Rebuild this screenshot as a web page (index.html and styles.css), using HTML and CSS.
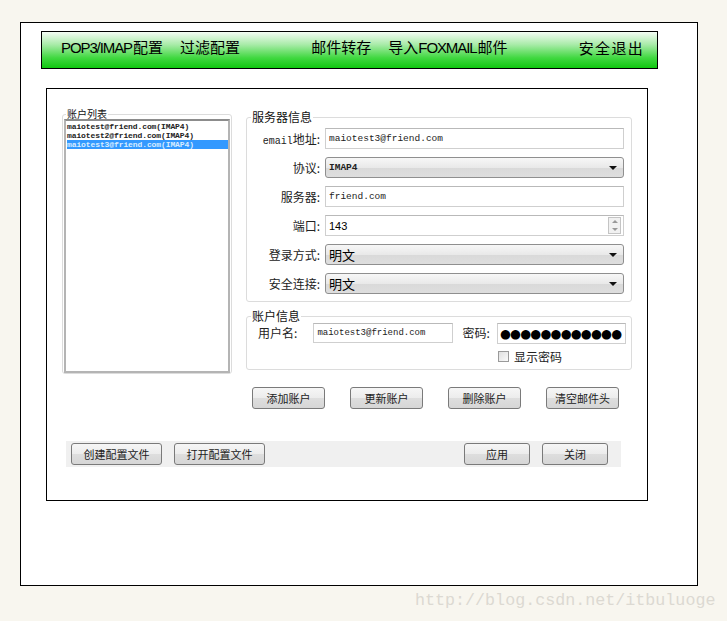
FILE: index.html
```html
<!DOCTYPE html>
<html lang="zh-CN">
<head>
<meta charset="utf-8">
<title>邮件配置</title>
<link rel="stylesheet" href="styles.css">
</head>
<body>
<div class="outer">
  <div class="topbar">
    <div class="grp">
      <span class="nav"><span class="lat">POP3/IMAP</span>配置</span>
      <span class="nav">过滤配置</span>
    </div>
    <div class="grp">
      <span class="nav">邮件转存</span>
      <span class="nav">导入<span class="lat">FOXMAIL</span>邮件</span>
    </div>
    <div class="grp">
      <span class="nav wide-nav">安全退出</span>
    </div>
  </div>

  <div class="dialog">
    <div class="main">
      <fieldset class="listgrp">
        <legend>账户列表</legend>
        <div class="listbox">
          <div class="item">maiotest@friend.com(IMAP4)</div>
          <div class="item">maiotest2@friend.com(IMAP4)</div>
          <div class="item sel">maiotest3@friend.com(IMAP4)</div>
        </div>
      </fieldset>

      <div class="right">
        <fieldset class="server">
          <legend>服务器信息</legend>
          <div class="row"><label class="lbl"><span class="mlbl">email</span>地址:</label><div class="field text mono">maiotest3@friend.com</div></div>
          <div class="row"><label class="lbl">协议:</label><div class="field select mono bold">IMAP4<span class="arrow"></span></div></div>
          <div class="row"><label class="lbl">服务器:</label><div class="field text mono">friend.com</div></div>
          <div class="row"><label class="lbl">端口:</label><div class="field text port">143<span class="spin"><span class="up"></span><span class="down"></span></span></div></div>
          <div class="row"><label class="lbl">登录方式:</label><div class="field select">明文<span class="arrow"></span></div></div>
          <div class="row"><label class="lbl">安全连接:</label><div class="field select">明文<span class="arrow"></span></div></div>
        </fieldset>

        <fieldset class="account">
          <legend>账户信息</legend>
          <div class="acc-row">
            <label class="ulbl">用户名:</label>
            <div class="field text mono user">maiotest3@friend.com</div>
            <label class="plbl">密码:</label>
            <div class="pwcol">
              <div class="field text pw">●●●●●●●●●●●●</div>
              <div class="show"><span class="chk"></span>显示密码</div>
            </div>
          </div>
        </fieldset>

        <div class="btnrow">
          <button class="btn">添加账户</button>
          <button class="btn">更新账户</button>
          <button class="btn">删除账户</button>
          <button class="btn">清空邮件头</button>
        </div>
      </div>
    </div>

    <div class="bottombar">
      <div class="bgrp">
        <button class="btn wide">创建配置文件</button>
        <button class="btn wide">打开配置文件</button>
      </div>
      <div class="bgrp">
        <button class="btn small">应用</button>
        <button class="btn small">关闭</button>
      </div>
    </div>
  </div>
</div>
<div class="watermark">http://blog.csdn.net/itbuluoge</div>
</body>
</html>
```

FILE: styles.css
```css
* { box-sizing: border-box; }

body {
  margin: 0;
  padding: 22px 0 0 20px;
  background: #f8f6ef;
  font-family: "Liberation Sans", "Noto Sans CJK SC", sans-serif;
  color: #000;
}

.outer {
  width: 678px;
  height: 564px;
  background: #fff;
  border: 1px solid #000;
  padding: 8px 0 0 20px;
}

.topbar {
  width: 617px;
  height: 38px;
  border: 1px solid #000;
  background: linear-gradient(to bottom, #f4fcf4 0%, #a8eba8 35%, #40d840 72%, #10c810 100%);
  display: flex;
  justify-content: space-between;
  align-items: center;
  padding: 0 13px 5px 19px;
  font-family: "Noto Sans CJK SC", sans-serif;
  font-size: 15px;
  line-height: 18px;
}

.grp { display: flex; gap: 17px; }
.nav { white-space: nowrap; }
.wide-nav { letter-spacing: 1.3px; }
.lat {
  font-family: "Liberation Sans Narrow", "Liberation Sans", sans-serif;
  font-size: 15px;
  letter-spacing: -1.1px;
  margin-right: 1px;
}

.dialog {
  margin: 19px 0 0 5px;
  width: 602px;
  height: 413px;
  border: 1px solid #000;
  padding: 20px 0 0 15px;
  font-family: "Noto Sans CJK SC", sans-serif;
  font-size: 12px;
}

.main { display: flex; gap: 14px; height: 300px; }

fieldset {
  margin: 0;
  padding: 0;
  min-width: 0;
  border: 1px solid #dcdcdc;
  border-radius: 3px;
}
legend {
  padding: 0 1px;
  margin-left: 4px;
  line-height: 12px;
  color: #111;
}

.listgrp {
  width: 170px;
  height: 265px;
  padding: 0 1px 1px 1px;
}
.listgrp legend { font-size: 10px; line-height: 10px; margin-left: 2px; }

.listbox {
  height: 254px;
  border: 2px solid #b4b4b4;
  border-top-color: #8c8c8c;
  background: #fff;
  padding: 1px 1px;
  font-family: "Liberation Mono", monospace;
  font-size: 8px;
  line-height: 9px;
  font-weight: bold;
  color: #222;
}
.item { padding-left: 0; white-space: nowrap; letter-spacing: -0.1px; }
.item.sel { background: #3399ff; color: #d8ecff; width: 161px; }

.right { width: 386px; padding-top: 2px; }

.server {
  height: 191px;
  padding: 5px 7px 0 0;
  display: flex;
  flex-direction: column;
  gap: 8px;
}

.row { display: flex; align-items: center; height: 21px; }
.lbl {
  width: 78px;
  text-align: right;
  padding-right: 5px;
  font-size: 12px;
  color: #222;
  white-space: nowrap;
}
.mlbl { font-family: "Liberation Mono", monospace; font-size: 10px; }

.field {
  position: relative;
  flex: none;
  height: 21px;
  display: flex;
  align-items: center;
  padding-left: 3px;
  white-space: nowrap;
}
.row .field { width: 299px; }
.text {
  border: 1px solid #cfcfcf;
  border-top-color: #b9b9b9;
  background: #fff;
}
.field.mono { font-family: "Liberation Mono", monospace; font-size: 9.5px; color: #222; }
.field.bold { font-weight: bold; }
.select {
  border: 1px solid #8f8f8f;
  border-radius: 3px;
  background: linear-gradient(to bottom, #f7f7f7 0%, #e9e9e9 50%, #d9d9d9 51%, #dedede 100%);
  font-size: 13px;
}
.arrow {
  position: absolute;
  right: 6px;
  top: 8px;
  border-left: 4px solid transparent;
  border-right: 4px solid transparent;
  border-top: 4px solid #111;
}
.port { font-family: "Liberation Sans", sans-serif; font-size: 11px; }
.spin {
  position: absolute;
  right: 2px;
  top: 1px;
  width: 13px;
  height: 17px;
  border: 1px solid #c4c4c4;
  background: #f1f1f1;
  display: flex;
  flex-direction: column;
  align-items: center;
  justify-content: space-around;
}
.up { border-left: 3px solid transparent; border-right: 3px solid transparent; border-bottom: 3px solid #999; }
.down { border-left: 3px solid transparent; border-right: 3px solid transparent; border-top: 3px solid #999; }

.account {
  margin-top: 8px;
  height: 60px;
  padding: 1px 5px 0 0;
}
.acc-row { display: flex; align-items: flex-start; padding-left: 11px; }
.ulbl { width: 56px; line-height: 20px; font-size: 12px; color: #222; }
.field.user { width: 140px; height: 20px; font-size: 9px; }
.plbl { margin-left: 9px; width: 35px; line-height: 20px; font-size: 12px; color: #222; }
.pwcol { display: flex; flex-direction: column; }
.field.pw {
  width: 129px;
  font-family: "DejaVu Sans", sans-serif;
  font-size: 12.5px;
  letter-spacing: -0.8px;
  color: #000;
  padding-left: 2px;
}
.show { display: flex; align-items: center; margin-top: 4px; gap: 5px; font-size: 12px; color: #222; }
.chk { width: 11px; height: 11px; border: 1px solid #9a9a9a; background: linear-gradient(135deg, #e0e0e0, #fafafa); margin-left: 1px; }

.btnrow { display: flex; gap: 25px; margin-top: 17px; padding-left: 6px; }

.btn {
  width: 73px;
  height: 22px;
  padding: 0;
  border: 1px solid #7a7a7a;
  border-radius: 3px;
  background: linear-gradient(to bottom, #f6f6f6 0%, #ececec 50%, #dedede 51%, #d6d6d6 100%);
  font-family: "Noto Sans CJK SC", sans-serif;
  font-size: 11px;
  color: #222;
}

.bottombar {
  margin: 32px 0 0 4px;
  width: 555px;
  height: 26px;
  background: #f0f0f0;
  display: flex;
  justify-content: space-between;
  align-items: center;
  padding: 0 13px 0 5px;
}
.bgrp { display: flex; gap: 12px; }
.btn.wide { width: 91px; }
.btn.small { width: 66px; }

.watermark {
  margin: 5px 0 0 395px;
  font-family: "Liberation Mono", monospace;
  font-size: 16.7px;
  line-height: 20px;
  color: #dcd9d2;
}
```
